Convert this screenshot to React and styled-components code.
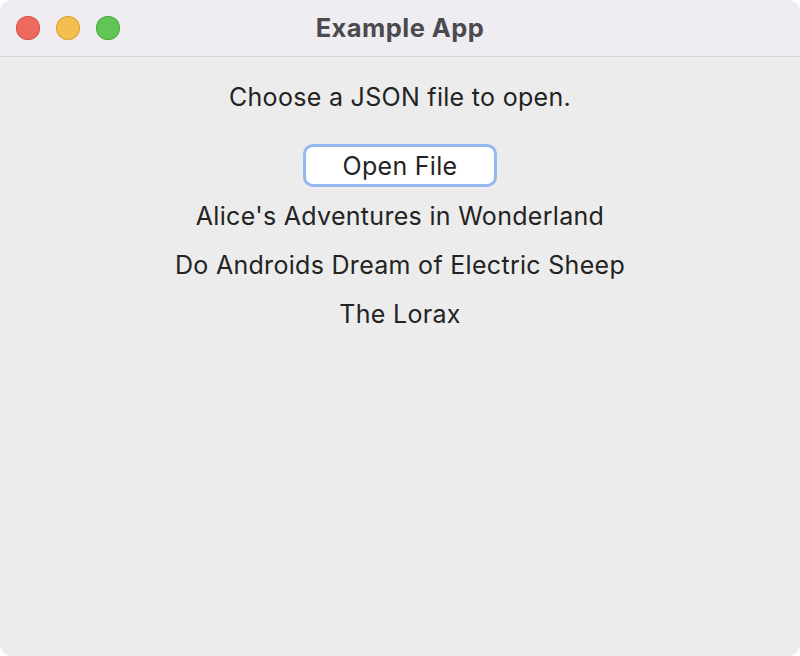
import React from "react";
import styled, { createGlobalStyle } from "styled-components";

const Global = createGlobalStyle`
  html, body { margin: 0; padding: 0; background: #ffffff; }
  body { font-family: Inter, "Noto Sans", "Liberation Sans", sans-serif; }
  * { box-sizing: border-box; }
`;

const Window = styled.div`
  width: 800px;
  height: 656px;
  border-radius: 12px;
  overflow: hidden;
  background: #ececec;
  display: flex;
  flex-direction: column;
`;

const TitleBar = styled.div`
  height: 57px;
  flex: none;
  background: #efedf2;
  border-bottom: 1px solid #d4d3d6;
  display: grid;
  grid-template-columns: 1fr auto 1fr;
  align-items: center;
  padding: 0 16px;
`;

const Lights = styled.div`
  display: flex;
  gap: 16px;
`;

const Light = styled.span`
  width: 24px;
  height: 24px;
  border-radius: 50%;
  background: ${(p) => p.$color};
  box-shadow: inset 0 0 0 1px ${(p) => p.$edge};
`;

const Title = styled.div`
  font-size: 25.5px;
  font-weight: 700;
  color: #4b4a4e;
  line-height: 30px;
  letter-spacing: 0.45px;
`;

const Content = styled.main`
  display: flex;
  flex-direction: column;
  align-items: center;
  padding-top: 26px;
  color: #232323;
  font-size: 25px;
  letter-spacing: 0.3px;
`;

const Prompt = styled.div`
  line-height: 28px;
  margin-bottom: 36px;
`;

const Button = styled.button`
  width: 188px;
  height: 37px;
  border: none;
  border-radius: 7px;
  background: #ffffff;
  font-family: inherit;
  font-size: 25px;
  letter-spacing: 0.3px;
  line-height: 28px;
  color: #232323;
  box-shadow: 0 0 0 3px #95b9ee, 0 1px 1px rgba(0,0,0,0.1);
  margin-bottom: 18px;
  padding: 0;
`;

const Item = styled.div`
  line-height: 28px;
  margin-bottom: 21px;
`;

const books = [
  "Alice's Adventures in Wonderland",
  "Do Androids Dream of Electric Sheep",
  "The Lorax",
];

export default function App() {
  return (
    <>
      <Global />
      <Window>
        <TitleBar>
          <Lights>
            <Light $color="#ee6a5f" $edge="#d5574c" />
            <Light $color="#f5bf4f" $edge="#d9a23b" />
            <Light $color="#61c555" $edge="#4fab43" />
          </Lights>
          <Title>Example App</Title>
          <div />
        </TitleBar>
        <Content>
          <Prompt>Choose a JSON file to open.</Prompt>
          <Button>Open File</Button>
          {books.map((b) => (
            <Item key={b}>{b}</Item>
          ))}
        </Content>
      </Window>
    </>
  );
}
